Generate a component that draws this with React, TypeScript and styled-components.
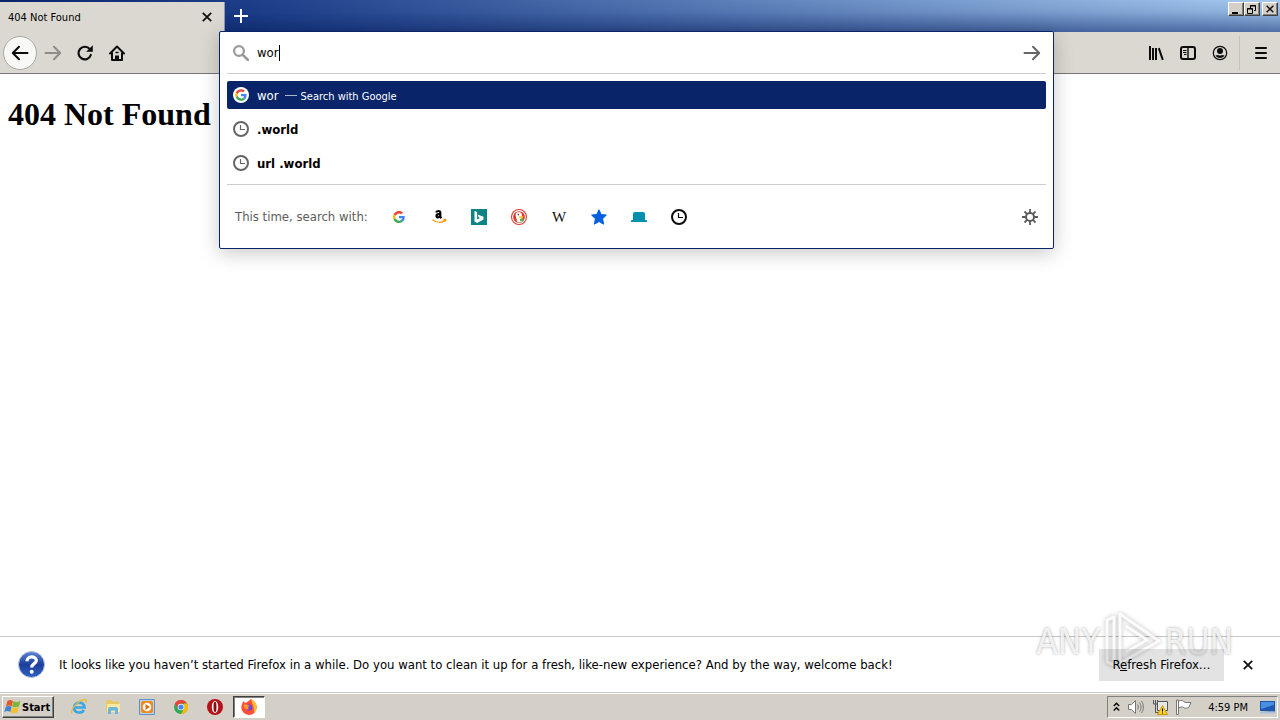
import React from 'react';
import styled, { createGlobalStyle, css } from 'styled-components';

const Global = createGlobalStyle`
  * { box-sizing: border-box; }
  body { margin: 0; background: #fff; font-family: 'DejaVu Sans Condensed', 'DejaVu Sans', sans-serif; font-size: 12px; color: #000; }
  button, input { font: inherit; color: inherit; }
  svg { display: block; flex: none; }
`;

const Page = styled.div`
  display: flex;
  flex-direction: column;
  min-height: 100vh;
`;

const TitleBar = styled.header`
  display: flex;
  height: 32px;
  background:
    linear-gradient(180deg, rgba(10, 36, 106, 0) 0%, rgba(10, 36, 106, 0.1) 35%, rgba(10, 36, 106, 0.55) 100%),
    linear-gradient(90deg, #0a246a 0%, #1d3f8a 20%, #a6caf0 100%);
`;

const Tab = styled.div`
  display: flex;
  align-items: center;
  justify-content: space-between;
  width: 225px;
  height: 30px;
  margin-top: 2px;
  padding: 0 8px;
  background: #dbd8d1;
  border-right: 1px solid #8f97ae;
  font-size: 11px;
`;

const IconButton = styled.button<{ $w?: number; $h?: number }>`
  display: flex;
  align-items: center;
  justify-content: center;
  flex: none;
  width: ${(p) => p.$w ?? 32}px;
  height: ${(p) => p.$h ?? 32}px;
  padding: 0;
  border: 0;
  background: none;
`;

const BackButton = styled(IconButton)`
  border: 1px solid #a9a7a2;
  border-radius: 50%;
  background: #f8f8f6;
`;

const WindowButtons = styled.div`
  display: flex;
  margin: 2px 2px 0 auto;
`;

const bevel = css`
  border: 1px solid;
  border-color: #fff #404040 #404040 #fff;
  box-shadow: inset -1px -1px 0 #808080;
  background: #d4d0c8;
`;

const WindowButton = styled.button<{ $gap?: boolean }>`
  ${bevel}
  display: flex;
  align-items: center;
  justify-content: center;
  width: 16px;
  height: 14px;
  padding: 0;
  margin-left: ${(p) => (p.$gap ? 2 : 0)}px;
`;

const NavBar = styled.nav`
  display: flex;
  align-items: center;
  height: 42px;
  padding: 0 3px;
  background: #dbd8d1;
  border-bottom: 1px solid #76757a;
`;

const UrlSlot = styled.div`
  position: relative;
  flex: 1;
  align-self: stretch;
  margin: 0 86px;
`;

const Divider = styled.span`
  width: 1px;
  height: 34px;
  margin: 0 5px 0 3px;
  background: #c6c2bb;
`;

const UrlPanel = styled.section`
  position: absolute;
  z-index: 2;
  top: -1px;
  left: 0;
  right: 0;
  padding: 0 7px;
  background: #fff;
  border: 1px solid #0a246a;
  border-radius: 2px;
  box-shadow: 0 4px 20px rgba(0, 0, 0, 0.22);
`;

const SearchRow = styled.div`
  display: flex;
  align-items: center;
  height: 42px;
  padding: 0 6px;
  border-bottom: 1px solid #cccccc;
`;

const SearchInput = styled.input`
  field-sizing: content;
  min-width: 0;
  margin: 0 0 0 8px;
  padding: 0;
  border: 0;
  outline: 0;
  background: none;
  caret-color: transparent;
  font-size: 13px;
`;

const Caret = styled.span`
  width: 1px;
  height: 16px;
  background: #000;
`;

const Results = styled.ul`
  display: flex;
  flex-direction: column;
  gap: 6px;
  margin: 0;
  padding: 7px 0;
  list-style: none;
`;

const Result = styled.li<{ $selected?: boolean }>`
  display: flex;
  align-items: center;
  gap: 8px;
  height: 28px;
  padding: 0 6px;
  border-radius: 2px;
  font-size: 13px;
  font-weight: ${(p) => (p.$selected ? 400 : 700)};
  color: ${(p) => (p.$selected ? '#fff' : '#000')};
  background: ${(p) => (p.$selected ? '#0a246a' : 'none')};
`;

const Hint = styled.small`
  padding-top: 2px;
  font-size: 11px;
`;

const Dash = styled.span`
  width: 12px;
  height: 1px;
  margin: 0 -4px 0 -2px;
  background: #a9b3cc;
`;

const Engines = styled.div`
  display: flex;
  align-items: center;
  height: 64px;
  padding: 0 0 0 8px;
  border-top: 1px solid #cccccc;
  color: #5c5c5c;
  font-size: 13px;
`;

const EnginesLabel = styled.span`
  width: 144px;
  white-space: nowrap;
`;

const Spacer = styled.span`
  flex: 1;
`;

const Content = styled.main`
  flex: 1;
  padding: 21px 8px;
`;

const Heading = styled.h1`
  margin: 0;
  font: bold 32px/38px 'Liberation Serif', serif;
`;

const Notice = styled.aside`
  position: relative;
  display: flex;
  align-items: center;
  height: 57px;
  padding: 0 16px 0 18px;
  background: #fff;
  border-top: 1px solid #c8c8c6;
  border-bottom: 1px solid #c8c8c6;
  font-size: 13px;
`;

const NoticeText = styled.p`
  flex: 1;
  margin: 0 0 0 14px;
`;

const RefreshButton = styled.button`
  position: relative;
  z-index: 1;
  width: 125px;
  height: 32px;
  margin-right: 8px;
  padding: 0;
  border: 0;
  background: rgba(0, 0, 0, 0.11);
  white-space: nowrap;
`;

const Watermark = styled.div`
  position: absolute;
  right: 47px;
  bottom: 19px;
  display: flex;
  align-items: center;
  gap: 3px;
  color: rgba(255, 255, 255, 0.8);
  font: 35px/62px 'DejaVu Sans Condensed', sans-serif;
  text-shadow: 0 0 3px rgba(0, 0, 0, 0.35);
  pointer-events: none;
`;

const TaskBar = styled.footer`
  display: flex;
  align-items: center;
  height: 27px;
  padding: 0 2px;
  background: #d4d0c8;
  border-top: 1px solid #fff;
`;

const StartButton = styled.button`
  ${bevel}
  display: flex;
  align-items: center;
  gap: 1px;
  width: 52px;
  height: 22px;
  margin-right: 8px;
  padding: 0 1px;
  font-size: 11px;
  font-weight: 700;
`;

const ActiveTask = styled(IconButton)`
  margin-left: 1px;
  border: 1px solid;
  border-color: #404040 #fff #fff #404040;
  box-shadow: inset 1px 1px 0 #808080;
  background: #fff;
`;

const Tray = styled.div`
  display: flex;
  align-items: center;
  gap: 8px;
  height: 22px;
  margin-left: auto;
  padding: 0 2px 0 5px;
  border: 1px solid;
  border-color: #808080 #fff #fff #808080;
  font-size: 11px;
`;

const Clock = styled.time`
  margin: 0 4px 0 8px;
  white-space: nowrap;
`;

const CloseIcon = ({ size = 10 }: { size?: number }) => (
  <svg width={size} height={size} viewBox="0 0 10 10" stroke="#111" strokeWidth="1.8">
    <path d="M.8.8l8.4 8.4M9.2.8L.8 9.2" />
  </svg>
);

const ArrowIcon = ({ color, back }: { color: string; back?: boolean }) => (
  <svg width="18" height="18" viewBox="0 0 18 18" fill="none" stroke={color} strokeWidth="2" strokeLinecap="round" strokeLinejoin="round">
    {back ? <path d="M16.5 9H2M8 2.8L1.8 9 8 15.2" /> : <path d="M1.5 9H16M10 2.8L16.2 9 10 15.2" />}
  </svg>
);

const GoogleIcon = ({ size, badge }: { size: number; badge?: boolean }) => (
  <svg width={size} height={size} viewBox={badge ? '-9 -9 66 66' : '0 0 48 48'}>
    {badge && <circle cx="24" cy="24" r="33" fill="#fff" />}
    <path fill="#ea4335" d="M24 9.5c3.5 0 6.700 1.200 9.200 3.600l6.900-6.900C35.900 2.400 30.500 0 24 0 14.600 0 6.500 5.400 2.600 13.200l8 6.200C12.400 13.700 17.700 9.500 24 9.500z" />
    <path fill="#4285f4" d="M47 24.600c0-1.600-.2-3.100-.4-4.600H24v9h12.900c-.6 3-2.300 5.500-4.800 7.200l7.700 6C44.400 38 47 31.800 47 24.600z" />
    <path fill="#fbbc05" d="M10.500 28.600A14.500 14.500 0 0 1 10.500 19.400l-8-6.200a24 24 0 0 0 0 21.600z" />
    <path fill="#34a853" d="M24 48c6.500 0 11.900-2.100 15.900-5.800l-7.700-6c-2.200 1.500-4.900 2.300-8.200 2.300-6.300 0-11.600-4.200-13.500-9.900l-8 6.200C6.500 42.600 14.600 48 24 48z" />
  </svg>
);

const ClockIcon = ({ color }: { color: string }) => (
  <svg width="16" height="16" viewBox="0 0 16 16" fill="none" stroke={color}>
    <circle cx="8" cy="8" r="7" strokeWidth="2" />
    <path d="M7.500 4v4.500H12" strokeWidth="1.200" />
  </svg>
);

const MagnifierIcon = () => (
  <svg width="16" height="16" viewBox="0 0 16 16" fill="none" stroke="#999" strokeWidth="2.200" strokeLinecap="round">
    <circle cx="6" cy="6" r="4.900" />
    <path d="M9.800 9.800L15 15" strokeWidth="2.600" />
  </svg>
);

const ReloadIcon = () => (
  <svg width="18" height="18" viewBox="0 0 18 18" fill="none" stroke="#0c0c0d" strokeWidth="2.200">
    <path d="M13.800 5.200A6.300 6.300 0 1 0 14.800 11" strokeLinecap="round" />
    <path d="M16.800 1.200v6.600h-6.600z" fill="#0c0c0d" stroke="none" />
  </svg>
);

const HomeIcon = () => (
  <svg width="16" height="16" viewBox="0 0 16 16" fill="none" stroke="#0c0c0d" strokeWidth="2" strokeLinecap="round" strokeLinejoin="round">
    <path d="M1 8.500L8 1.500l7 7M3 8v7h10V8" />
    <path d="M6 15v-4.500h4V15z" fill="#0c0c0d" stroke="none" />
    <path d="M7 7.500h2" strokeWidth="1.500" />
  </svg>
);

const LibraryIcon = () => (
  <svg width="16" height="16" viewBox="0 0 16 16" stroke="#0c0c0d" strokeWidth="2">
    <path d="M2 1v14M5 3v12M8 3v12M10.800 3.200l4 11.600" />
  </svg>
);

const SidebarIcon = () => (
  <svg width="16" height="16" viewBox="0 0 16 16" fill="none" stroke="#0c0c0d">
    <rect x="1" y="2" width="14" height="12" rx="2" strokeWidth="2" />
    <path d="M8 2v12" strokeWidth="1.400" />
    <path d="M3 5.500h3.500M3 7.500h3.500M4 9.500h2.500" />
  </svg>
);

const AccountIcon = () => (
  <svg width="16" height="16" viewBox="0 0 16 16">
    <circle cx="8" cy="8" r="6.700" fill="none" stroke="#0c0c0d" strokeWidth="1.200" />
    <circle cx="8" cy="6" r="3" fill="#0c0c0d" />
    <path d="M3.500 10.300c1.500 0 2-.3 2.500-.3 1.500.8 2.500.8 4 0 .5 0 1 .3 2.500.3C11.700 12 10 13 8 13s-3.700-1-4.500-2.700z" fill="#0c0c0d" />
  </svg>
);

const MenuIcon = () => (
  <svg width="12" height="12" viewBox="0 0 12 12" stroke="#0c0c0d" strokeWidth="2" strokeLinecap="round">
    <path d="M1 1h10M1 6h10M1 11h10" />
  </svg>
);

const AmazonIcon = () => (
  <svg width="16" height="16" viewBox="0 0 16 16" fill="none">
    <path d="M5.200 3.500C5.500 1.600 9.300 1.300 9.300 3.700V7.300c0 .8.400 1.200 1.200 1.900M9.300 4.900C6.500 4.900 5.500 5.800 5.500 7c0 2 3 1.900 3.800-.4" stroke="#000" strokeWidth="2.200" />
    <path d="M1.500 10.800c4 3.200 9 3 12.300.8M12.300 10.600l2.400-.2-.5 2.300" stroke="#f90" strokeWidth="1.300" />
  </svg>
);

const BingIcon = () => (
  <svg width="16" height="16" viewBox="0 0 16 16">
    <path fill="#0c8484" d="M0 0h16v16H0z" />
    <path fill="#fff" d="M3.500 2l2.600.9v7.500l2.800-1.500-1.300-.7-1-2.600 5.900 2.100v2.800L6.100 14l-2.600-1.500z" />
  </svg>
);

const DuckIcon = () => (
  <svg width="16" height="16" viewBox="0 0 16 16">
    <circle cx="8" cy="8" r="8" fill="#d8392b" />
    <circle cx="8" cy="8" r="6.400" fill="none" stroke="#fff" strokeWidth="1.100" />
    <path d="M6.300 13.300L4.600 6.500C4.300 4.300 5.600 3 7.600 3c2.200 0 3.400 1.300 3.400 3.300L10.600 9l.6 4z" fill="#fff" />
    <path d="M8 7.200h4.600l-1 2H8.300z" fill="#fc3" />
    <path d="M8.600 10l3.800-.5v3L9.400 12.500z" fill="#5ab552" />
    <circle cx="7.400" cy="5.600" r=".8" fill="#234" />
  </svg>
);

const WikiGlyph = styled.span`
  font: 15px/16px 'Liberation Serif', serif;
  color: #111;
`;

const StarIcon = () => (
  <svg width="16" height="16" viewBox="0 0 16 16" fill="#0060df" stroke="#0060df" strokeLinejoin="round">
    <path d="M8 .8l2.200 4.700 5.200.6-3.800 3.600 1 5.500L8 12.500l-4.600 2.700 1-5.500L.6 6.100l5.200-.6z" />
  </svg>
);

const TabsIcon = () => (
  <svg width="16" height="16" viewBox="0 0 16 16" fill="#0090ad">
    <path d="M2 11V5a2 2 0 0 1 2-2h8a2 2 0 0 1 2 2v6h1a1 1 0 0 1 1 1v1H0v-1a1 1 0 0 1 1-1z" />
  </svg>
);

const GearIcon = () => (
  <svg width="16" height="16" viewBox="0 0 16 16" fill="none" stroke="#5c5c5c" strokeWidth="2">
    <circle cx="8" cy="8" r="4" />
    <path d="M8 0v4M8 12v4M0 8h4M12 8h4M2.500 2.500l2.600 2.600M10.900 10.900l2.600 2.600M13.500 2.500l-2.600 2.600M5.100 10.900l-2.600 2.600" strokeWidth="1.800" />
  </svg>
);

const HelpIcon = () => (
  <svg width="27" height="27" viewBox="0 0 27 27">
    <defs>
      <linearGradient id="help" x2="0" y2="1">
        <stop offset="0" stopColor="#5c86d6" />
        <stop offset=".5" stopColor="#1c3f9c" />
        <stop offset="1" stopColor="#2f62c4" />
      </linearGradient>
    </defs>
    <circle cx="13.500" cy="13.500" r="13" fill="url(#help)" stroke="#b7c4dd" />
    <path d="M9 10.300c0-6 9.300-5.500 9.300-.9 0 3.400-4.600 3-4.600 7" fill="none" stroke="#fff" strokeWidth="3.200" />
    <circle cx="13.700" cy="20.700" r="2" fill="#fff" />
  </svg>
);

const WindowsFlag = () => (
  <svg width="17" height="16" viewBox="0 0 17 16">
    <path fill="#e2582b" d="M3.500 2C5.500.5 7 1 9 2L7.700 7.200C5.800 6.200 4.200 6.200 2 7.200z" />
    <path fill="#7db534" d="M9.500 2.300c2.200 1 4.400 1 7-.3L15 7.300c-2.200 1.300-4.500 1.300-6.800.2z" />
    <path fill="#3d83cf" d="M1.800 7.800c2.200-1.200 3.800-1 5.800 0l-1.300 5.100C4.400 11.800 2.500 11.800.3 12.900z" />
    <path fill="#f5c02e" d="M8 8.200c2.400 1 4.600 1 6.900-.2l-1.400 5.200c-2.200 1.200-4.400 1.200-6.900.2z" />
  </svg>
);

const IeIcon = () => (
  <svg width="18" height="18" viewBox="0 0 18 18" fill="none">
    <path d="M4 9.500h10.500C14.500 3 4 3 4 9.700c0 5.500 7.500 6.300 9.800 2.300" stroke="#3aa7e4" strokeWidth="2.600" />
    <path d="M2 15.500C-.5 12 9 2 14.500 1.500c2.500 0 2 2 1 3.500" stroke="#e9bb3b" strokeWidth="1.300" />
  </svg>
);

const FolderIcon = () => (
  <svg width="18" height="18" viewBox="0 0 18 18">
    <path d="M2 3.500l1-1.500h4l1 1.500h7V14H2z" fill="#e8c964" />
    <path d="M3 6h13v8H3z" fill="#f8e8a4" />
    <path d="M4 16V11a2 2 0 0 1 2-2h6a2 2 0 0 1 2 2v5h-3v-3.500H7V16z" fill="#6bb5de" />
  </svg>
);

const MediaIcon = () => (
  <svg width="16" height="16" viewBox="0 0 16 16">
    <path d="M.5.5h15v15H.5z" fill="#b9d3ec" stroke="#5d93c8" />
    <rect x="2" y="2" width="12" height="12" rx="2" fill="#f08a1c" />
    <circle cx="8" cy="8" r="4.300" fill="#fff" />
    <path d="M6.500 5l4.500 3-4.500 3z" fill="#e86c10" />
  </svg>
);

const ChromeIcon = () => (
  <svg width="14" height="14" viewBox="0 0 14 14">
    <circle cx="7" cy="7" r="7" fill="#34a853" />
    <path d="M.9 3.500A7 7 0 0 1 13.100 3.500H7L4 8.800z" fill="#ea4335" />
    <path d="M13.100 3.500A7 7 0 0 1 7 14l3-5.200V3.500z" fill="#fbbc05" />
    <circle cx="7" cy="7" r="3.300" fill="#fff" />
    <circle cx="7" cy="7" r="2.600" fill="#4285f4" />
  </svg>
);

const OperaIcon = () => (
  <svg width="16" height="16" viewBox="0 0 16 16">
    <circle cx="8" cy="8" r="8" fill="#b31217" />
    <ellipse cx="8" cy="8" rx="3.200" ry="6" fill="#fff" />
    <ellipse cx="8" cy="8" rx="1.500" ry="5.200" fill="#8d0a0e" />
  </svg>
);

const FirefoxIcon = () => (
  <svg width="16" height="16" viewBox="0 0 16 16">
    <path d="M1 5L2.500 2 4 4l3-1.500L10 0c2.500 1.500 5.500 4 5.700 8A7.700 7.700 0 0 1 8 16 7.600 7.600 0 0 1 .3 8.500z" fill="#ff4f3a" />
    <path d="M10 0c3 2 5.700 4.500 5.700 8 0 2.500-1.200 5-3 6.500C14 9 11 5 10 0z" fill="#ffbd2e" />
    <circle cx="8" cy="8.500" r="3.200" fill="#7a3fd0" />
    <path d="M2.500 6c2-1 4.500 0 6.500 1-1.500 0-2.500 2-1 3.500-3 .5-5.500-2-5.500-4.500z" fill="#ff9a2a" />
  </svg>
);

const ChevronsIcon = () => (
  <svg width="7" height="10" viewBox="0 0 7 10" fill="none" stroke="#000" strokeWidth="1.400">
    <path d="M.8 4l2.700-2.700L6.200 4M.8 8.500l2.700-2.700 2.700 2.700" />
  </svg>
);

const SpeakerIcon = () => (
  <svg width="16" height="14" viewBox="0 0 16 14" fill="none" stroke="#777">
    <path d="M.5 4.500h3l4-4v13l-4-4h-3z" fill="#fff" />
    <path d="M9.500 4.500c1 1.500 1 3.500 0 5M11.500 2.500c2 2.500 2 6.500 0 9M13.500 1c2.500 3.500 2.500 8.500 0 12" />
  </svg>
);

const NetworkIcon = () => (
  <svg width="16" height="16" viewBox="0 0 16 16" fill="none" stroke="#555">
    <path d="M5.500 2.500h10v9h-10z" fill="#e6e6e6" />
    <path d="M1.500 1v4h4V1M3.500 1v12.500H9" />
    <path d="M10.500 6.500l5 9h-10z" fill="#ffd21f" stroke="#c79b00" />
    <path d="M10.500 9.500v3M10.500 13.500v1" stroke="#000" />
  </svg>
);

const FlagIcon = () => (
  <svg width="16" height="16" viewBox="0 0 16 16" fill="#fff" stroke="#777">
    <path d="M.5 1h2v14.500h-2z" />
    <path d="M2.500 2c3-1 5-.5 6.500 1.500h6L13 8c-2 1.500-4 1.500-5.500.5-1.500-.8-3.500-.5-5 .5z" />
  </svg>
);

const DesktopIcon = () => (
  <svg width="15" height="13" viewBox="0 0 15 13">
    <path d="M0 0h15v10.500L0 10z" fill="#1c58b0" />
    <path d="M1 1h13v3C9 5 5 7 1 8z" fill="#4a8ee0" />
    <path d="M0 11h15v1.500H0z" fill="#a9c1de" />
  </svg>
);

const LogoSvg = styled.svg`
  filter: drop-shadow(0 0 2px rgba(0, 0, 0, 0.3));
`;

const PlayLogo = () => (
  <LogoSvg width="58" height="62" viewBox="0 0 58 62" fill="none" stroke="#fff" strokeOpacity=".9" strokeWidth="3" strokeLinejoin="round">
    <path d="M16 3l39 27-39 22z" />
    <path d="M22 15l21 14-21 12" />
    <path d="M10 6L3 9v42l7 3z" />
  </LogoSvg>
);

const engines = [
  { name: 'Google', icon: <GoogleIcon size={12} /> },
  { name: 'Amazon', icon: <AmazonIcon /> },
  { name: 'Bing', icon: <BingIcon /> },
  { name: 'DuckDuckGo', icon: <DuckIcon /> },
  { name: 'Wikipedia', icon: <WikiGlyph>W</WikiGlyph> },
  { name: 'Bookmarks', icon: <StarIcon /> },
  { name: 'Tabs', icon: <TabsIcon /> },
  { name: 'History', icon: <ClockIcon color="#0c0c0d" /> },
];

const launchers = [
  { name: 'Internet Explorer', icon: <IeIcon /> },
  { name: 'Explorer', icon: <FolderIcon /> },
  { name: 'Media Player', icon: <MediaIcon /> },
  { name: 'Chrome', icon: <ChromeIcon /> },
  { name: 'Opera', icon: <OperaIcon /> },
];

export default function App() {
  return (
    <Page>
      <Global />
      <TitleBar>
        <Tab>
          <span>404 Not Found</span>
          <IconButton $w={18} $h={20} aria-label="Close tab"><CloseIcon /></IconButton>
        </Tab>
        <IconButton aria-label="New tab">
          <svg width="14" height="14" viewBox="0 0 14 14" stroke="#fff" strokeWidth="2"><path d="M7 0v14M0 7h14" /></svg>
        </IconButton>
        <WindowButtons>
          <WindowButton aria-label="Minimize">
            <svg width="10" height="9" viewBox="0 0 10 9"><path d="M1 7h6v2H1z" /></svg>
          </WindowButton>
          <WindowButton aria-label="Restore">
            <svg width="10" height="9" viewBox="0 0 10 9" fill="none" stroke="#000"><path d="M3.500 3V.5h5v5H7M3 1h6M.5 3.500h5v5h-5zM0 4h6" /></svg>
          </WindowButton>
          <WindowButton $gap aria-label="Close"><CloseIcon size={8} /></WindowButton>
        </WindowButtons>
      </TitleBar>
      <NavBar>
        <BackButton $w={34} $h={34} aria-label="Back"><ArrowIcon color="#0c0c0d" back /></BackButton>
        <IconButton aria-label="Forward"><ArrowIcon color="#8f8d89" /></IconButton>
        <IconButton aria-label="Reload"><ReloadIcon /></IconButton>
        <IconButton aria-label="Home"><HomeIcon /></IconButton>
        <UrlSlot>
          <UrlPanel>
            <SearchRow>
              <MagnifierIcon />
              <SearchInput aria-label="Search or enter address" defaultValue="wor" />
              <Caret />
              <Spacer />
              <IconButton $w={16} aria-label="Go"><ArrowIcon color="#666" /></IconButton>
            </SearchRow>
            <Results>
              <Result $selected>
                <GoogleIcon size={16} badge />
                <span>wor</span>
                <Dash />
                <Hint>Search with Google</Hint>
              </Result>
              <Result><ClockIcon color="#666" />.world</Result>
              <Result><ClockIcon color="#666" />url .world</Result>
            </Results>
            <Engines>
              <EnginesLabel>This time, search with:</EnginesLabel>
              {engines.map((e) => (
                <IconButton key={e.name} $w={40} aria-label={e.name}>{e.icon}</IconButton>
              ))}
              <Spacer />
              <IconButton aria-label="Search settings"><GearIcon /></IconButton>
            </Engines>
          </UrlPanel>
        </UrlSlot>
        <IconButton aria-label="Library"><LibraryIcon /></IconButton>
        <IconButton aria-label="Sidebar"><SidebarIcon /></IconButton>
        <IconButton aria-label="Account"><AccountIcon /></IconButton>
        <Divider />
        <IconButton aria-label="Menu"><MenuIcon /></IconButton>
      </NavBar>
      <Content>
        <Heading>404 Not Found</Heading>
      </Content>
      <Notice>
        <HelpIcon />
        <NoticeText>
          It looks like you haven’t started Firefox in a while. Do you want to clean it up for a fresh, like-new experience? And by the way, welcome back!
        </NoticeText>
        <RefreshButton>R<u>e</u>fresh Firefox…</RefreshButton>
        <IconButton aria-label="Dismiss"><CloseIcon /></IconButton>
        <Watermark><span>ANY</span><PlayLogo /><span>RUN</span></Watermark>
      </Notice>
      <TaskBar>
        <StartButton><WindowsFlag />Start</StartButton>
        {launchers.map((l) => (
          <IconButton key={l.name} $w={34} $h={24} aria-label={l.name}>{l.icon}</IconButton>
        ))}
        <ActiveTask $w={32} $h={22} aria-label="Firefox"><FirefoxIcon /></ActiveTask>
        <Tray>
          <ChevronsIcon />
          <SpeakerIcon />
          <NetworkIcon />
          <FlagIcon />
          <Clock>4:59 PM</Clock>
          <DesktopIcon />
        </Tray>
      </TaskBar>
    </Page>
  );
}
